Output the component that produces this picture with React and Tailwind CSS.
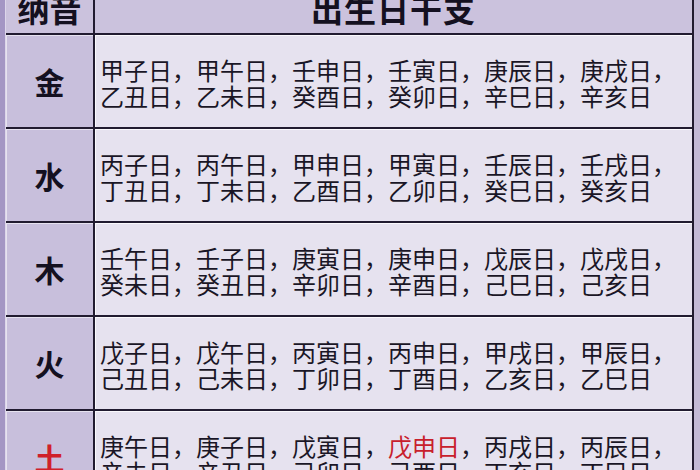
import React from 'react';

const rows = [
  {
    el: '金',
    lines: [
      ['甲子日，', '甲午日，', '壬申日，', '壬寅日，', '庚辰日，', '庚戌日，'],
      ['乙丑日，', '乙未日，', '癸酉日，', '癸卯日，', '辛巳日，', '辛亥日'],
    ],
  },
  {
    el: '水',
    lines: [
      ['丙子日，', '丙午日，', '甲申日，', '甲寅日，', '壬辰日，', '壬戌日，'],
      ['丁丑日，', '丁未日，', '乙酉日，', '乙卯日，', '癸巳日，', '癸亥日'],
    ],
  },
  {
    el: '木',
    lines: [
      ['壬午日，', '壬子日，', '庚寅日，', '庚申日，', '戊辰日，', '戊戌日，'],
      ['癸未日，', '癸丑日，', '辛卯日，', '辛酉日，', '己巳日，', '己亥日'],
    ],
  },
  {
    el: '火',
    lines: [
      ['戊子日，', '戊午日，', '丙寅日，', '丙申日，', '甲戌日，', '甲辰日，'],
      ['己丑日，', '己未日，', '丁卯日，', '丁酉日，', '乙亥日，', '乙巳日'],
    ],
  },
  {
    el: '土',
    red: true,
    lines: [
      ['庚午日，', '庚子日，', '戊寅日，', ['戊申日', '，'], '丙戌日，', '丙辰日，'],
      ['辛未日，', '辛丑日，', '己卯日，', '己酉日，', '丁亥日，', '丁巳日'],
    ],
  },
];

const font = { fontFamily: '"Noto Sans CJK SC", "Noto Sans", sans-serif' };

function Line({ parts }) {
  return (
    <div className="whitespace-nowrap h-[26px] leading-[26px]">
      {parts.map((p, i) =>
        Array.isArray(p) ? (
          <span key={i}>
            <span className="text-[#c8202c]">{p[0]}</span>
            {p[1]}
          </span>
        ) : (
          <span key={i}>{p}</span>
        )
      )}
    </div>
  );
}

export default function App() {
  return (
    <div className="w-[700px] h-[470px] overflow-hidden bg-[#c3b9d6]" style={font}>
      <div className="flex h-full">
        <div className="w-[6px] shrink-0 bg-[#a496c4] border-r border-[#ddd6ea]" />
        <div className="-mt-[14px] grid grid-cols-[87px_597px] grid-rows-[47px_repeat(5,92px)] gap-[2px] bg-[#211b30] pr-[2px] pb-[2px] self-start">
          <div className="bg-[#cbc2dd] flex items-end justify-center pb-[9px] text-[32px] leading-[32px] font-bold text-[#141020]">
            纳音
          </div>
          <div className="bg-[#cbc2dd] flex items-end justify-center pb-[9px] text-[32px] leading-[32px] font-bold text-[#141020] tracking-[1px]">
            出生日干支
          </div>
          {rows.map((r) => (
            <React.Fragment key={r.el}>
              <div
                className={`bg-[#c8bfdc] shadow-[inset_1px_1px_0_rgba(255,255,255,0.55)] flex items-center justify-center text-[30px] font-bold ${
                  r.red ? 'text-[#d0202a]' : 'text-[#141020]'
                }`}
              >
                {r.el}
              </div>
              <div className="bg-[#e6e2ef] shadow-[inset_1px_1px_0_rgba(255,255,255,0.8)] flex flex-col justify-center pl-[5px] pt-[3px] text-[24px] text-[#1a1626]">
                {r.lines.map((l, i) => (
                  <Line key={i} parts={l} />
                ))}
              </div>
            </React.Fragment>
          ))}
        </div>
      </div>
    </div>
  );
}
